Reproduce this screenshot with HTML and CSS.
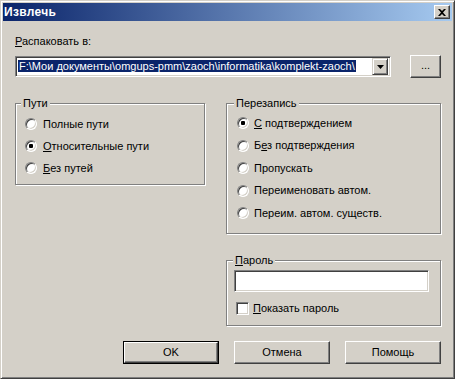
FILE: index.html
```html
<!DOCTYPE html>
<html lang="ru">
<head>
<meta charset="utf-8">
<title>Извлечь</title>
<link rel="stylesheet" href="styles.css">
</head>
<body>
<div class="window">
  <div class="titlebar">
    <span class="title">Извлечь</span>
    <span class="close">
      <svg width="8" height="7" viewBox="0 0 8 7"><path d="M0 0h2l2 2 2-2h2L5 3.5 8 7H6L4 5 2 7H0l3-3.5z" fill="#000"/></svg>
    </span>
  </div>
  <div class="content">
    <div class="label"><u>Р</u>аспаковать в:</div>
    <div class="pathrow">
      <div class="combo">
        <div class="combo-text"><span class="sel">F:\Мои документы\omgups-pmm\zaoch\informatika\komplekt-zaoch\</span></div>
        <span class="drop"><svg width="7" height="4" viewBox="0 0 7 4"><path d="M0 0h7L3.5 4z" fill="#000"/></svg></span>
      </div>
      <span class="btn browse">...</span>
    </div>
    <div class="groups">
      <fieldset class="group paths">
        <legend>Пути</legend>
        <div class="opt"><span class="radio"></span><span>Полные пути</span></div>
        <div class="opt"><span class="radio on"></span><span><u>О</u>тносительные пути</span></div>
        <div class="opt"><span class="radio"></span><span><u>Б</u>ез путей</span></div>
      </fieldset>
      <div class="rightcol">
        <fieldset class="group overwrite">
          <legend>Перезапись</legend>
          <div class="opt"><span class="radio on"></span><span><u>С</u> подтверждением</span></div>
          <div class="opt"><span class="radio"></span><span>Б<u>е</u>з подтверждения</span></div>
          <div class="opt"><span class="radio"></span><span>Пропускать</span></div>
          <div class="opt"><span class="radio"></span><span>Переименовать автом.</span></div>
          <div class="opt"><span class="radio"></span><span>Переим. автом. существ.</span></div>
        </fieldset>
        <fieldset class="group password">
          <legend><u>П</u>ароль</legend>
          <div class="field"></div>
          <div class="opt check"><span class="checkbox"></span><span><u>П</u>оказать пароль</span></div>
        </fieldset>
      </div>
    </div>
    <div class="buttons">
      <span class="default"><span class="btn">OK</span></span>
      <span class="btn">Отмена</span>
      <span class="btn">Помощь</span>
    </div>
  </div>
</div>
</body>
</html>
```
FILE: styles.css
```css
html, body {
  margin: 0;
  padding: 0;
  background: #d4d0c8;
}
body {
  font-family: "Liberation Sans", Arial, sans-serif;
  font-size: 11px;
  line-height: 13px;
  color: #000;
}
u { text-decoration: underline; text-underline-offset: 1px; }

.window {
  width: 455px;
  height: 379px;
  box-sizing: border-box;
  background: #d4d0c8;
  border: 1px solid;
  border-color: #d4d0c8 #404040 #404040 #d4d0c8;
  box-shadow: inset 1px 1px 0 #fff, inset -1px -1px 0 #808080;
  padding: 2px;
}

.titlebar {
  height: 18px;
  display: flex;
  align-items: center;
  justify-content: space-between;
  background: linear-gradient(to right, #0a246a, #a6caf0);
  padding: 0 2px 0 1px;
}
.title {
  color: #fff;
  font-weight: bold;
  font-size: 12px;
  letter-spacing: 0.3px;
}
.close {
  width: 16px;
  height: 14px;
  box-sizing: border-box;
  display: flex;
  align-items: center;
  justify-content: center;
  background: #d4d0c8;
  border: 1px solid;
  border-color: #fff #404040 #404040 #fff;
  box-shadow: inset -1px -1px 0 #808080;
  padding-right: 1px;
}

.content {
  padding: 14px 11px 0 12px;
}

.pathrow {
  margin-top: 7px;
  display: flex;
  align-items: center;
  justify-content: space-between;
}

.combo {
  width: 376px;
  height: 21px;
  box-sizing: border-box;
  background: #fff;
  border: 1px solid;
  border-color: #808080 #fff #fff #808080;
  box-shadow: inset 1px 1px 0 #404040, inset -1px -1px 0 #d4d0c8;
  display: flex;
  align-items: center;
  padding: 2px;
}
.combo-text {
  flex: 1;
  white-space: nowrap;
  overflow: hidden;
}
.sel {
  background: #0a246a;
  color: #fff;
  padding: 0 1px;
}
.drop {
  width: 16px;
  height: 17px;
  box-sizing: border-box;
  display: flex;
  align-items: center;
  justify-content: center;
  background: #d4d0c8;
  border: 1px solid;
  border-color: #d4d0c8 #404040 #404040 #d4d0c8;
  box-shadow: inset 1px 1px 0 #fff, inset -1px -1px 0 #808080;
}

.btn {
  display: flex;
  align-items: center;
  justify-content: center;
  box-sizing: border-box;
  background: #d4d0c8;
  border: 1px solid;
  border-color: #fff #404040 #404040 #fff;
  box-shadow: inset -1px -1px 0 #808080;
  height: 23px;
  width: 96px;
}
.browse {
  width: 31px;
  padding-bottom: 2px;
}

.groups {
  margin-top: 19px;
  display: flex;
  gap: 21px;
  align-items: flex-start;
}

.group {
  margin: 0;
  min-width: 0;
  border: 1px solid #808080;
  box-shadow: 1px 1px 0 #fff, inset 1px 1px 0 #fff;
  box-sizing: border-box;
}
.group legend {
  padding: 0 2px;
  background: #d4d0c8;
  line-height: 13px;
}

.paths {
  width: 190px;
  height: 88px;
  padding: 3px 9px 0 9px;
}
.paths legend { margin-left: -4px; }
.rightcol {
  display: flex;
  flex-direction: column;
  gap: 20px;
}
.overwrite {
  width: 215px;
  height: 137px;
  padding: 2px 10px 0 10px;
}
.overwrite legend { margin-left: -3px; }
.overwrite .opt { height: 22.5px; gap: 5px; }

.password {
  width: 215px;
  height: 72px;
  padding: 1px 7px 0 7px;
}
.password legend { margin-left: -1px; }

.opt {
  display: flex;
  align-items: center;
  gap: 6px;
  height: 22px;
  white-space: nowrap;
}

.radio {
  position: relative;
  width: 12px;
  height: 12px;
  box-sizing: border-box;
  border-radius: 50%;
  background: #fff;
  border: 1px solid;
  border-color: #808080 #fff #fff #808080;
  box-shadow: inset 1px 1px 0 #404040, inset -1px -1px 0 #d4d0c8;
  flex: none;
}
.radio.on::after {
  content: "";
  position: absolute;
  left: 3px;
  top: 3px;
  width: 4px;
  height: 4px;
  border-radius: 1px;
  background: #000;
}

.field {
  margin-top: 2px;
  height: 22px;
  width: 195px;
  box-sizing: border-box;
  background: #fff;
  border: 1px solid;
  border-color: #808080 #fff #fff #808080;
  box-shadow: inset 1px 1px 0 #404040, inset -1px -1px 0 #d4d0c8;
}
.check {
  margin-top: 5px;
  padding-left: 2px;
  gap: 4px;
}
.checkbox {
  width: 13px;
  height: 13px;
  box-sizing: border-box;
  background: #fff;
  border: 1px solid;
  border-color: #808080 #fff #fff #808080;
  box-shadow: inset 1px 1px 0 #404040, inset -1px -1px 0 #d4d0c8;
  flex: none;
}

.buttons {
  margin-top: 15px;
  display: flex;
  justify-content: flex-end;
  gap: 15px;
}
.default {
  display: block;
  border: 1px solid #000;
}
.default .btn {
  width: 94px;
  height: 21px;
}
```
